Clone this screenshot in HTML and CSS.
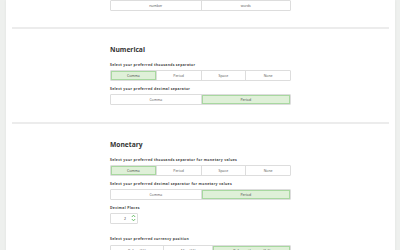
FILE: index.html
```html
<!DOCTYPE html>
<html lang="en">

<head>
    <meta charset="UTF-8">
    <title>Number Format Settings</title>
    <link rel="stylesheet" href="styles.css">
</head>

<body>
    <div class="container">
        <div class="section section-top">
            <div class="btn-group cols-2">
                <button>number</button>
                <button>words</button>
            </div>
        </div>

        <hr class="divider">

        <div class="section">
            <h2>Numerical</h2>
            <label>Select your preferred thousands separator</label>
            <div class="btn-group cols-4">
                <button class="active">Comma</button>
                <button>Period</button>
                <button>Space</button>
                <button>None</button>
            </div>
            <label>Select your preferred decimal separator</label>
            <div class="btn-group cols-2">
                <button>Comma</button>
                <button class="active">Period</button>
            </div>
        </div>

        <hr class="divider">

        <div class="section">
            <h2>Monetary</h2>
            <label>Select your preferred thousands separator for monetary values</label>
            <div class="btn-group cols-4">
                <button class="active">Comma</button>
                <button>Period</button>
                <button>Space</button>
                <button>None</button>
            </div>
            <label>Select your preferred decimal separator for monetary values</label>
            <div class="btn-group cols-2">
                <button>Comma</button>
                <button class="active">Period</button>
            </div>
            <label>Decimal Places</label>
            <div class="number-input">
                <span class="value">2</span>
                <span class="spinner">
                    <svg width="5" height="8" viewBox="0 0 5 8">
                        <path d="M0.8 3 L2.5 1.2 L4.2 3" fill="none" stroke="#5cb85c" stroke-width="0.9"/>
                        <path d="M0.8 5 L2.5 6.8 L4.2 5" fill="none" stroke="#5cb85c" stroke-width="0.9"/>
                    </svg>
                </span>
            </div>
            <label>Select your preferred currency position</label>
            <div class="btn-group cols-currency">
                <button>Before ($1)</button>
                <button>After (1$)</button>
                <button class="active">Before with space ($ 1)</button>
            </div>
        </div>
    </div>
</body>

</html>
```

FILE: styles.css
```css
body {
    font-family: "Open Sans", "Liberation Sans", sans-serif;
    margin: 0;
    padding: 0;
    background-color: #eef0ee;
    color: #333;
}

.container {
    margin: 0 5px 0 6px;
    padding: 0 6px;
    background-color: #fff;
    box-shadow: 0 0 3px rgba(0, 0, 0, 0.06);
    min-height: 250px;
}

.section {
    width: 181px;
    margin: 0 auto;
    padding: 16px 0 12px;
}

.section-top {
    padding: 0 0 16px;
}

.divider {
    margin: 0;
    border: none;
    height: 2px;
    background-color: #ececec;
}

h2 {
    margin: 0 0 7.8px;
    font-size: 6.7px;
    line-height: 9px;
    font-weight: 700;
    color: #333;
}

label {
    display: block;
    margin-bottom: 3.5px;
    font-size: 3.45px;
    line-height: 5px;
    font-weight: 700;
    letter-spacing: 0.3px;
    color: #444;
}

.btn-group {
    display: grid;
    height: 11px;
    margin-bottom: 4.5px;
    border: 1px solid #ddd;
    border-radius: 1px;
    box-sizing: border-box;
}

.section-top .btn-group {
    margin-bottom: 0;
}

.cols-2 {
    grid-template-columns: 1fr 1fr;
}

.cols-4 {
    grid-template-columns: 1fr 1fr 1fr 1fr;
}

.cols-currency {
    grid-template-columns: 52fr 50fr 78fr;
}

.btn-group button {
    margin: 0;
    padding: 0;
    border: none;
    border-left: 1px solid #ddd;
    background-color: #fff;
    font-family: inherit;
    font-size: 3.5px;
    color: #555;
}

.btn-group button:first-child {
    border-left: none;
}

.btn-group button.active {
    background-color: #dff0d8;
    box-shadow: inset 0 0 0 1px #a8d8a0;
    color: #444;
}

.number-input {
    display: flex;
    align-items: center;
    justify-content: flex-end;
    width: 28px;
    height: 10.5px;
    margin-bottom: 12.5px;
    border: 1px solid #ddd;
    border-radius: 1px;
    box-sizing: border-box;
    font-size: 3.5px;
}

.number-input .value {
    margin-right: 5px;
}

.number-input .spinner {
    display: flex;
    margin-right: 1px;
}
```
